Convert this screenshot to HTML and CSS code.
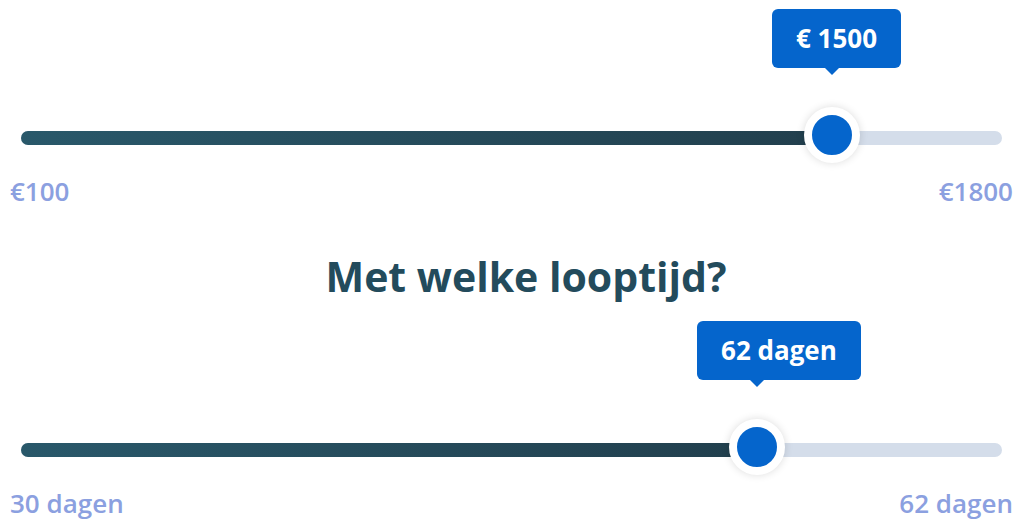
FILE: index.html
```
<!DOCTYPE html>
<html lang="nl">
<head>
<meta charset="utf-8">
<link rel="stylesheet" href="styles.css">
</head>
<body>
<main class="page">
  <section class="slider slider-amount">
    <div class="track">
      <div class="fill" style="width:82.67%"></div>
      <div class="tooltip" style="left:82.67%">€ 1500</div>
      <div class="thumb" style="left:82.67%"></div>
    </div>
    <div class="labels"><span>€100</span><span>€1800</span></div>
  </section>
  <h2 class="title">Met welke looptijd?</h2>
  <section class="slider slider-term">
    <div class="track">
      <div class="fill" style="width:75.03%"></div>
      <div class="tooltip" style="left:75.03%">62 dagen</div>
      <div class="thumb" style="left:75.03%"></div>
    </div>
    <div class="labels"><span>30 dagen</span><span>62 dagen</span></div>
  </section>
</main>
</body>
</html>
```
FILE: styles.css
```
html, body {
  margin: 0;
  padding: 0;
  background: #ffffff;
}
body {
  font-family: "Open Sans", "Liberation Sans", sans-serif;
  width: 1024px;
  height: 527px;
  overflow: hidden;
}
.page {
  padding: 0 22px 0 21px;
}
.slider-amount {
  padding-top: 131px;
}
.slider-term {
  padding-top: 142px;
}
.track {
  position: relative;
  height: 14px;
  border-radius: 7px;
  background: #d4ddea;
}
.fill {
  height: 100%;
  border-radius: 7px 0 0 7px;
  background: linear-gradient(90deg, #29586a 0%, #223f4d 100%);
}
.thumb {
  position: absolute;
  top: -24.5px;
  width: 40px;
  height: 40px;
  margin-left: -28px;
  border: 8px solid #ffffff;
  border-radius: 50%;
  background: #0565cc;
  box-shadow: 0 0 8px rgba(0, 0, 0, 0.14);
}
.tooltip {
  position: absolute;
  bottom: calc(100% + 63px);
  margin-left: -60px;
  height: 59px;
  padding: 0 24px;
  line-height: 58px;
  border-radius: 6px;
  background: #0565cc;
  color: #ffffff;
  font-size: 26px;
  font-weight: 700;
  white-space: nowrap;
}
.tooltip::after {
  content: "";
  position: absolute;
  left: 60px;
  top: 100%;
  margin-left: -7px;
  border-left: 7px solid transparent;
  border-right: 7px solid transparent;
  border-top: 7px solid #0565cc;
}
.labels {
  display: flex;
  justify-content: space-between;
  margin: 31px -11px 0 -11px;
  font-size: 26px;
  line-height: 30px;
  font-weight: 600;
  color: #8ba0e0;
}
.title {
  margin: 45px 0 0 0;
  padding-left: 29px;
  text-align: center;
  font-size: 41px;
  line-height: 50px;
  font-weight: 700;
  color: #234b5c;
}
```
